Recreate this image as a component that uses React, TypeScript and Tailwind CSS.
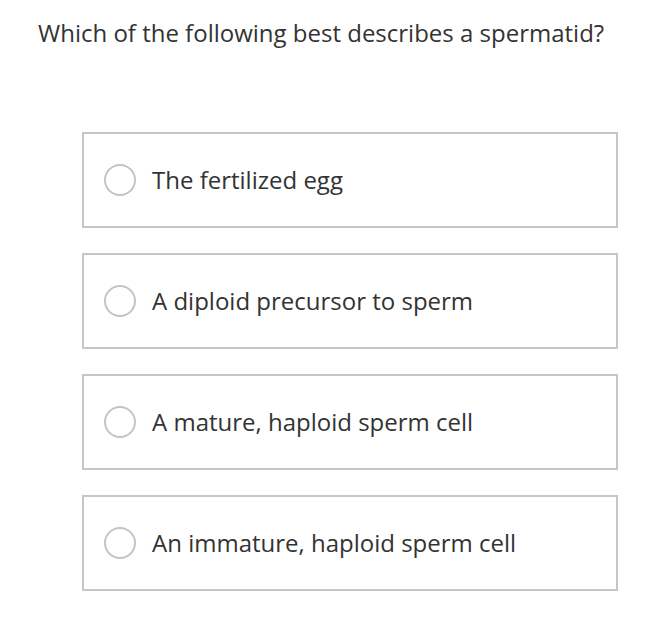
import React from "react";

const options = [
  "The fertilized egg",
  "A diploid precursor to sperm",
  "A mature, haploid sperm cell",
  "An immature, haploid sperm cell",
];

export default function App() {
  return (
    <div className="min-h-screen bg-white font-['Open_Sans',sans-serif] text-[#333333]">
      <div className="pl-[38px] pt-[17px]">
        <h1 className="text-[24px] leading-[32px]">
          Which of the following best describes a spermatid?
        </h1>
      </div>

      <div className="ml-[82px] mt-[83px] flex w-[536px] flex-col gap-[25px]">
        {options.map((opt) => (
          <label
            key={opt}
            className="flex h-[96px] cursor-pointer items-center border-2 border-[#c6c6c6] pl-[20px]"
          >
            <span className="h-[32px] w-[32px] shrink-0 rounded-full border-2 border-[#c4c4c4]" />
            <span className="ml-[16px] text-[24px] leading-[32px]">{opt}</span>
          </label>
        ))}
      </div>
    </div>
  );
}
